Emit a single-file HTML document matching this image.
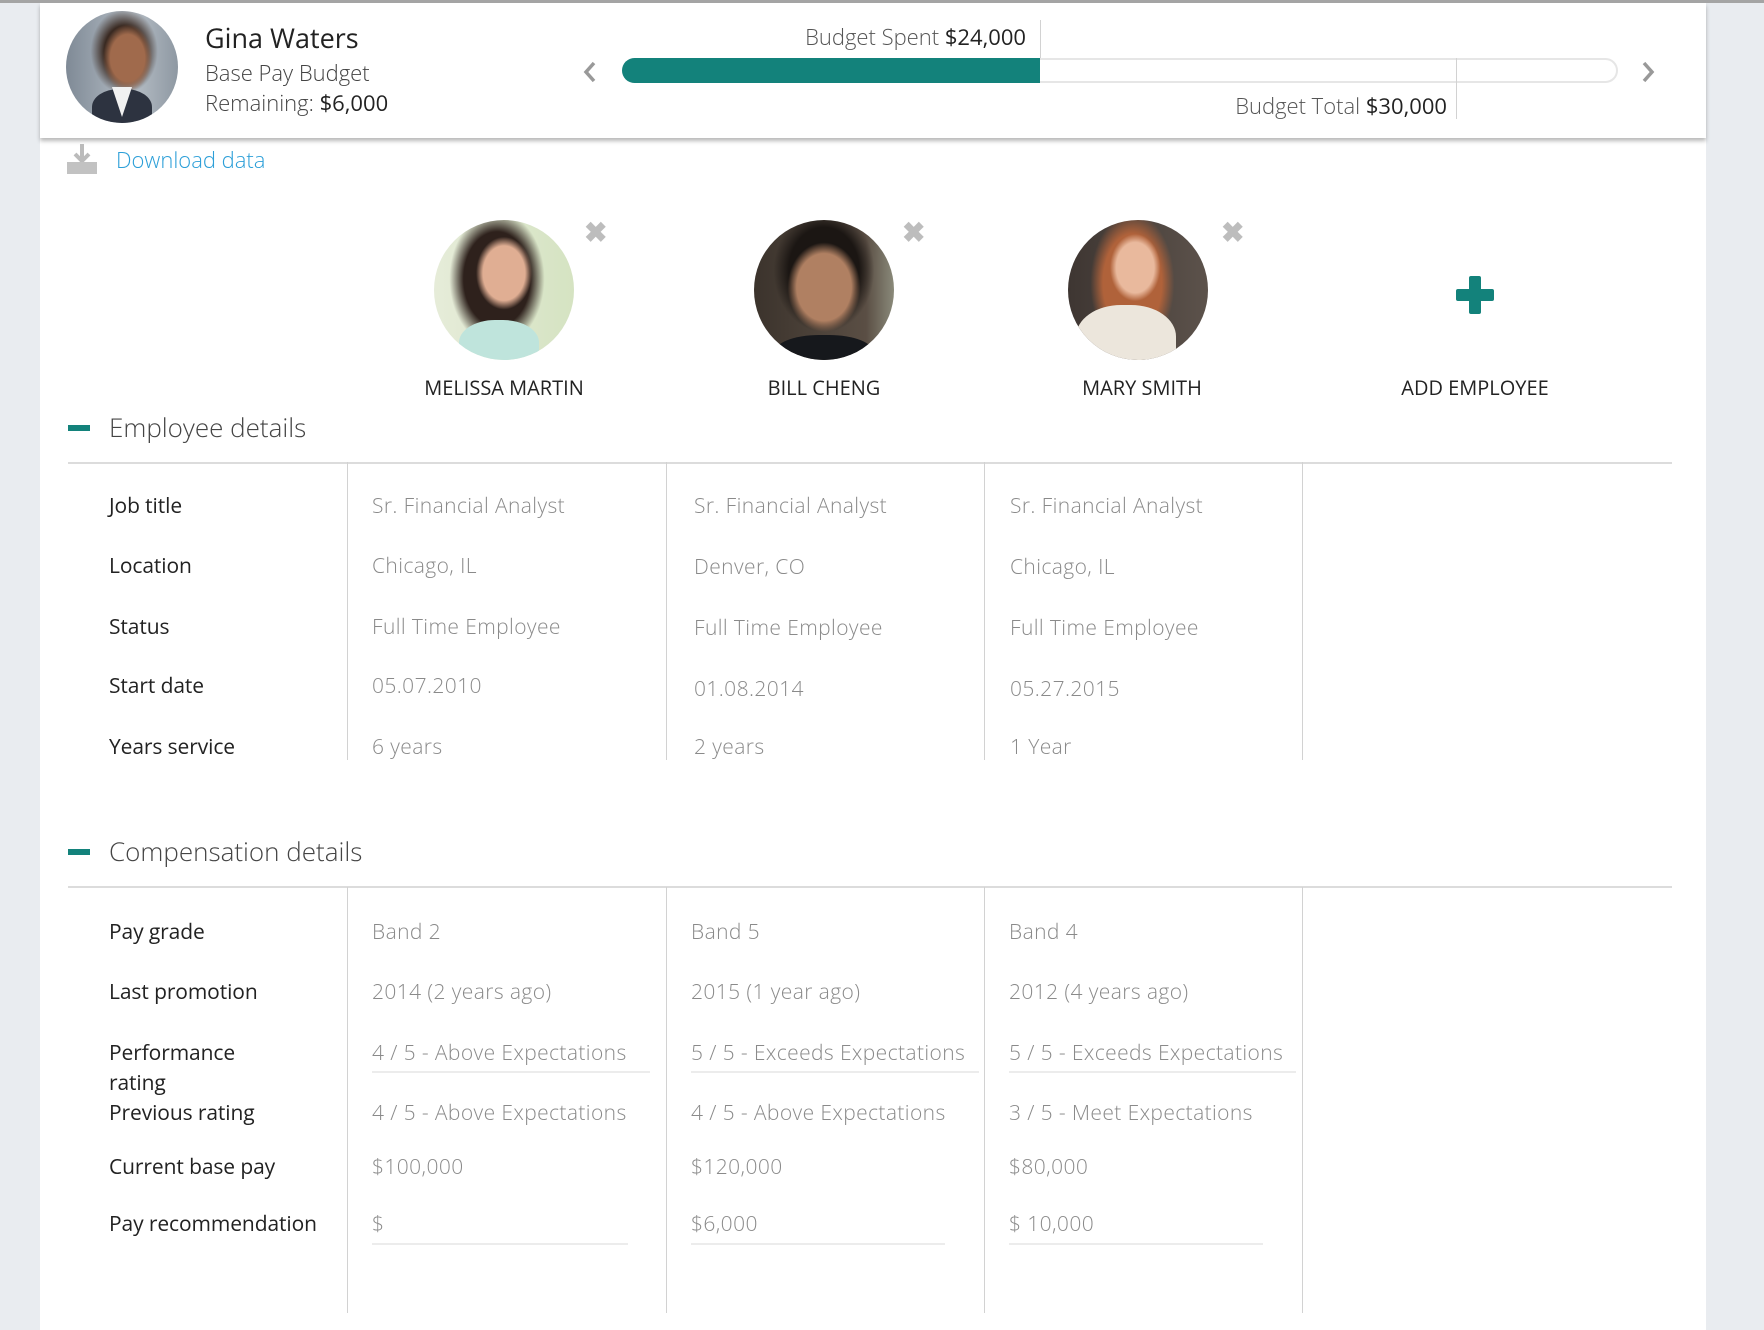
<!DOCTYPE html>
<html><head><meta charset="utf-8"><style>
*{margin:0;padding:0;box-sizing:border-box}
body{width:1764px;height:1330px;background:#e9ecf0;position:relative;overflow:hidden;font-family:"Open Sans","Liberation Sans",sans-serif;color:#333;font-weight:300}
.a{position:absolute;white-space:nowrap;line-height:1.2}
b{font-weight:400}
#main{position:absolute;left:40px;top:0;width:1666px;height:1330px;background:#fff}
#top{position:absolute;left:0;top:0;width:1764px;height:3px;background:#a4a4a4}
#hdr{position:absolute;left:40px;top:3px;width:1666px;height:135px;background:#fff;box-shadow:0 3px 4px rgba(0,0,0,.28)}
.lbl{font-size:21px;color:#222;font-weight:400;letter-spacing:-0.1px}
.val{font-size:21px;color:#8a8a8a;letter-spacing:0.4px}
.vl{position:absolute;width:1px;background:#d2d2d2}
.ul{position:absolute;height:2px;background:#ececec}
.av{position:absolute;border-radius:50%;overflow:hidden}
.x{position:absolute;font-size:28px;color:#bdbdbd;font-weight:bold;line-height:1}
.nm{font-size:20px;color:#222;font-weight:400;transform:translateX(-50%)}
</style></head><body>
<div id="main"></div>
<div id="hdr"></div>
<div id="top"></div>

<!-- header -->
<div class="av" style="left:66px;top:11px;width:112px;height:112px;background:radial-gradient(ellipse 22% 30% at 55% 42%,#a06a4c 0 70%,transparent 100%),radial-gradient(ellipse 30% 38% at 52% 36%,#3a2a22 0 60%,transparent 100%),linear-gradient(90deg,#7f8a96,#b6bec6 60%,#8e98a2)">
<div style="position:absolute;left:26px;top:78px;width:60px;height:40px;border-radius:45% 45% 0 0;background:#2d3340"></div>
<div style="position:absolute;left:46px;top:76px;width:20px;height:30px;background:#f1f1f1;clip-path:polygon(0 0,100% 0,50% 100%)"></div></div>
<div class="a" style="left:205px;top:22px;font-size:27px;color:#222;font-weight:400">Gina Waters</div>
<div class="a" style="left:205px;top:60px;font-size:22px;color:#444">Base Pay Budget</div>
<div class="a" style="left:205px;top:90px;font-size:22px;color:#444">Remaining: <b style="color:#222">$6,000</b></div>

<svg class="a" style="left:580px;top:60px" width="20" height="24"><path d="M14 3 L6 12 L14 21" stroke="#999" stroke-width="3.5" fill="none"/></svg>
<svg class="a" style="left:1638px;top:60px" width="20" height="24"><path d="M6 3 L14 12 L6 21" stroke="#999" stroke-width="3.5" fill="none"/></svg>

<div class="a" style="left:622px;top:58px;width:996px;height:25px;border:2px solid #e6e6e6;border-radius:13px"></div>
<div class="a" style="left:622px;top:58px;width:418px;height:25px;background:#13827b;border-radius:13px 0 0 13px"></div>
<div class="vl" style="left:1040px;top:20px;height:38px"></div>
<div class="vl" style="left:1456px;top:58px;height:61px"></div>
<div class="a" style="right:738px;top:24px;font-size:22px;color:#555">Budget Spent <b style="color:#222">$24,000</b></div>
<div class="a" style="right:317px;top:93px;font-size:22px;color:#555">Budget Total <b style="color:#222">$30,000</b></div>

<!-- download -->
<svg class="a" style="left:66px;top:142px" width="32" height="34"><path d="M16 2 V18 M9 12 L16 19 L23 12" stroke="#bbb" stroke-width="4" fill="none"/><rect x="1" y="20" width="30" height="12" fill="#c2c2c2"/></svg>
<div class="a" style="left:116px;top:147px;font-size:22px;color:#2c9fd8">Download data</div>

<!-- avatars -->
<div class="av" style="left:434px;top:220px;width:140px;height:140px;background:radial-gradient(ellipse 20% 26% at 50% 38%,#e0ae93 0 75%,transparent 100%),radial-gradient(ellipse 34% 48% at 45% 42%,#2e211c 0 70%,transparent 100%),linear-gradient(90deg,#e6ecd9,#d5e3c2)">
<div style="position:absolute;left:25px;top:100px;width:80px;height:50px;border-radius:45% 45% 0 0;background:#bfe4dc"></div></div>
<div class="av" style="left:754px;top:220px;width:140px;height:140px;background:radial-gradient(ellipse 26% 32% at 50% 48%,#b08062 0 75%,transparent 100%),radial-gradient(ellipse 36% 44% at 50% 36%,#1b1613 0 70%,transparent 100%),linear-gradient(90deg,#3b332c,#5a4e44 80%,#8a8a7a)">
<div style="position:absolute;left:20px;top:115px;width:100px;height:40px;border-radius:45% 45% 0 0;background:#16181c"></div></div>
<div class="av" style="left:1068px;top:220px;width:140px;height:140px;background:radial-gradient(ellipse 18% 24% at 48% 34%,#e9b99d 0 75%,transparent 100%),radial-gradient(ellipse 30% 50% at 46% 45%,#b0623a 0 70%,transparent 100%),linear-gradient(90deg,#3e3632,#5c524b)">
<div style="position:absolute;left:8px;top:85px;width:100px;height:70px;border-radius:45% 45% 0 0;background:#ece6dc"></div></div>
<div class="x" style="left:584px;top:218px">✖</div>
<div class="x" style="left:902px;top:218px">✖</div>
<div class="x" style="left:1221px;top:218px">✖</div>
<div class="a" style="left:1456px;top:289px;width:38px;height:12px;background:#13827b;border-radius:2px"></div>
<div class="a" style="left:1469px;top:276px;width:12px;height:38px;background:#13827b;border-radius:2px"></div>

<div class="a nm" style="left:504px;top:376px">MELISSA MARTIN</div>
<div class="a nm" style="left:824px;top:376px">BILL CHENG</div>
<div class="a nm" style="left:1142px;top:376px">MARY SMITH</div>
<div class="a nm" style="left:1475px;top:376px">ADD EMPLOYEE</div>

<!-- employee details -->
<div class="a" style="left:68px;top:425px;width:22px;height:6px;background:#13827b"></div>
<div class="a" style="left:109px;top:412px;font-size:26px;color:#444">Employee details</div>
<div class="a" style="left:68px;top:462px;width:1604px;height:2px;background:#dcdcdc"></div>
<div class="vl" style="left:347px;top:462px;height:298px"></div>
<div class="vl" style="left:666px;top:462px;height:298px"></div>
<div class="vl" style="left:984px;top:462px;height:298px"></div>
<div class="vl" style="left:1302px;top:462px;height:298px"></div>

<div class="a lbl" style="left:109px;top:494px">Job title</div>
<div class="a lbl" style="left:109px;top:554px">Location</div>
<div class="a lbl" style="left:109px;top:615px">Status</div>
<div class="a lbl" style="left:109px;top:674px">Start date</div>
<div class="a lbl" style="left:109px;top:735px">Years service</div>

<div class="a val" style="left:372px;top:494px">Sr. Financial Analyst</div>
<div class="a val" style="left:372px;top:554px">Chicago, IL</div>
<div class="a val" style="left:372px;top:615px">Full Time Employee</div>
<div class="a val" style="left:372px;top:674px">05.07.2010</div>
<div class="a val" style="left:372px;top:735px">6 years</div>

<div class="a val" style="left:694px;top:494px">Sr. Financial Analyst</div>
<div class="a val" style="left:694px;top:555px">Denver, CO</div>
<div class="a val" style="left:694px;top:616px">Full Time Employee</div>
<div class="a val" style="left:694px;top:677px">01.08.2014</div>
<div class="a val" style="left:694px;top:735px">2 years</div>

<div class="a val" style="left:1010px;top:494px">Sr. Financial Analyst</div>
<div class="a val" style="left:1010px;top:555px">Chicago, IL</div>
<div class="a val" style="left:1010px;top:616px">Full Time Employee</div>
<div class="a val" style="left:1010px;top:677px">05.27.2015</div>
<div class="a val" style="left:1010px;top:735px">1 Year</div>

<!-- compensation -->
<div class="a" style="left:68px;top:849px;width:22px;height:6px;background:#13827b"></div>
<div class="a" style="left:109px;top:836px;font-size:26px;color:#444">Compensation details</div>
<div class="a" style="left:68px;top:886px;width:1604px;height:2px;background:#dcdcdc"></div>
<div class="vl" style="left:347px;top:887px;height:426px"></div>
<div class="vl" style="left:666px;top:887px;height:426px"></div>
<div class="vl" style="left:984px;top:887px;height:426px"></div>
<div class="vl" style="left:1302px;top:887px;height:426px"></div>

<div class="a lbl" style="left:109px;top:920px">Pay grade</div>
<div class="a lbl" style="left:109px;top:980px">Last promotion</div>
<div class="a lbl" style="left:109px;top:1041px">Performance</div>
<div class="a lbl" style="left:109px;top:1071px">rating</div>
<div class="a lbl" style="left:109px;top:1101px">Previous rating</div>
<div class="a lbl" style="left:109px;top:1155px">Current base pay</div>
<div class="a lbl" style="left:109px;top:1212px">Pay recommendation</div>

<div class="a val" style="left:372px;top:920px">Band 2</div>
<div class="a val" style="left:372px;top:980px">2014 (2 years ago)</div>
<div class="a val" style="left:372px;top:1041px">4 / 5 - Above Expectations</div>
<div class="ul" style="left:372px;top:1071px;width:278px"></div>
<div class="a val" style="left:372px;top:1101px">4 / 5 - Above Expectations</div>
<div class="a val" style="left:372px;top:1155px">$100,000</div>
<div class="a val" style="left:372px;top:1212px">$</div>
<div class="ul" style="left:372px;top:1243px;width:256px"></div>

<div class="a val" style="left:691px;top:920px">Band 5</div>
<div class="a val" style="left:691px;top:980px">2015 (1 year ago)</div>
<div class="a val" style="left:691px;top:1041px">5 / 5 - Exceeds Expectations</div>
<div class="ul" style="left:691px;top:1071px;width:288px"></div>
<div class="a val" style="left:691px;top:1101px">4 / 5 - Above Expectations</div>
<div class="a val" style="left:691px;top:1155px">$120,000</div>
<div class="a val" style="left:691px;top:1212px">$6,000</div>
<div class="ul" style="left:691px;top:1243px;width:254px"></div>

<div class="a val" style="left:1009px;top:920px">Band 4</div>
<div class="a val" style="left:1009px;top:980px">2012 (4 years ago)</div>
<div class="a val" style="left:1009px;top:1041px">5 / 5 - Exceeds Expectations</div>
<div class="ul" style="left:1009px;top:1071px;width:287px"></div>
<div class="a val" style="left:1009px;top:1101px">3 / 5 - Meet Expectations</div>
<div class="a val" style="left:1009px;top:1155px">$80,000</div>
<div class="a val" style="left:1009px;top:1212px">$ 10,000</div>
<div class="ul" style="left:1009px;top:1243px;width:254px"></div>
</body></html>
